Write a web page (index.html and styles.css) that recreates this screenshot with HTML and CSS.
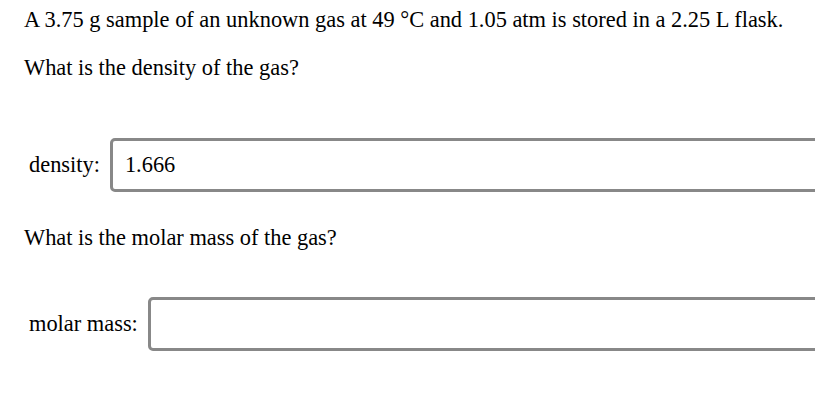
FILE: index.html
```html
<!DOCTYPE html>
<html>
<head>
<meta charset="utf-8">
<link rel="stylesheet" href="styles.css">
</head>
<body>
<div class="page">
  <p class="q first">A 3.75 g sample of an unknown gas at 49 °C and 1.05 atm is stored in a 2.25 L flask.</p>
  <p class="q second">What is the density of the gas?</p>
  <div class="row row-density">
    <label class="lbl">density:</label>
    <input class="field" type="text" value="1.666">
  </div>
  <p class="q third">What is the molar mass of the gas?</p>
  <div class="row row-molar">
    <label class="lbl">molar mass:</label>
    <input class="field" type="text" value="">
  </div>
</div>
</body>
</html>
```
FILE: styles.css
```css
html, body {
  margin: 0;
  padding: 0;
  background: #fff;
}
.page {
  font-family: "Liberation Serif", "Times New Roman", serif;
  font-size: 22.4px;
  color: #000;
  padding-left: 24px;
  padding-top: 7px;
  overflow: hidden;
  width: 791px;
  height: 407px;
}
.q {
  margin: 0;
  line-height: 26px;
  white-space: nowrap;
}
.second { margin-top: 22px; }
.third { margin-top: 33px; }
.row {
  display: flex;
  align-items: center;
  margin-top: 57px;
}
.row-molar { margin-top: 46px; }
.lbl {
  padding-left: 5px;
  margin-right: 10px;
  white-space: nowrap;
}
.field {
  flex: none;
  box-sizing: border-box;
  width: 820px;
  height: 54px;
  border: 3px solid #888;
  border-radius: 5px;
  padding: 0 12px;
  font-family: inherit;
  font-size: 22.4px;
  color: #000;
  background: #fff;
  outline: none;
}
```
